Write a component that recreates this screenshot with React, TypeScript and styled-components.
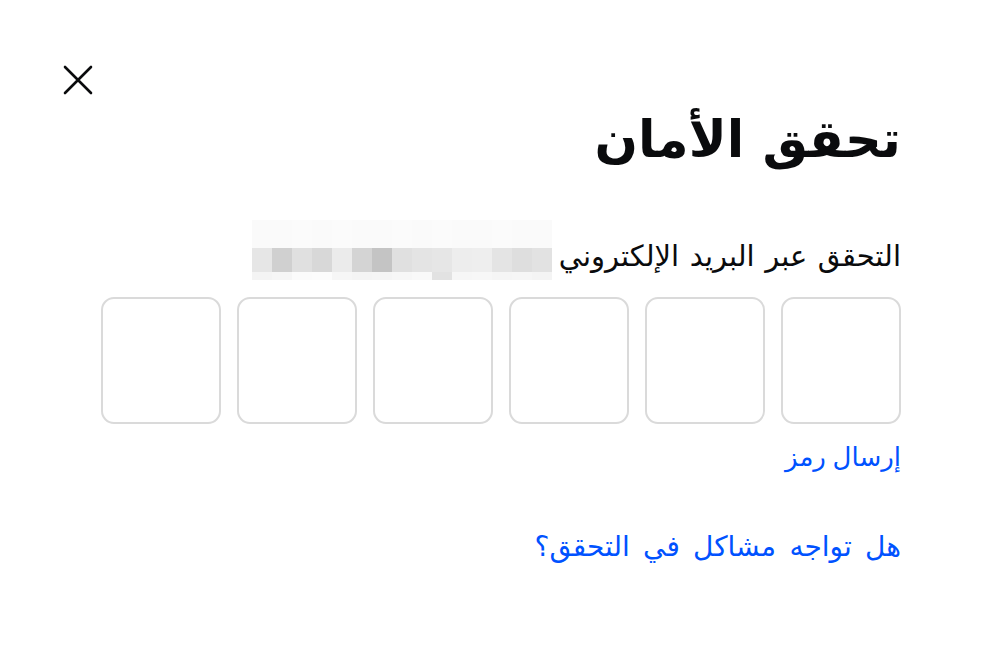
import { createGlobalStyle } from "styled-components";
import styled from "styled-components";

const GlobalStyle = createGlobalStyle`
  html, body {
    margin: 0;
    padding: 0;
    background: #ffffff;
  }
  body {
    font-family: "Noto Sans", "DejaVu Sans", sans-serif;
    color: #0a0b0d;
  }
`;

const Page = styled.div`
  width: 1002px;
  height: 670px;
  box-sizing: border-box;
  padding: 63px 0 0 0;
  position: relative;
`;

const CloseButton = styled.button`
  position: absolute;
  left: 60px;
  top: 62px;
  width: 36px;
  height: 36px;
  padding: 0;
  border: none;
  background: none;
  cursor: pointer;
  display: flex;
  align-items: center;
  justify-content: center;
`;

const Content = styled.div`
  width: 800px;
  margin: 0 auto;
  direction: rtl;
  display: flex;
  flex-direction: column;
  align-items: stretch;
`;

const Title = styled.h1`
  margin: 38px 0 0 0;
  font-size: 51px;
  font-weight: 700;
  line-height: 72px;
  word-spacing: 5px;
  text-align: right;
`;

const SubRow = styled.div`
  display: flex;
  align-items: center;
  gap: 7px;
  margin-top: 52px;
  height: 60px;
`;

const Subtitle = styled.span`
  font-size: 29px;
  line-height: 40px;
  word-spacing: 3px;
  white-space: nowrap;
`;

const Redaction = styled.svg`
  flex-shrink: 0;
  margin-bottom: 10px;
`;

const CodeRow = styled.div`
  display: grid;
  grid-template-columns: repeat(6, 1fr);
  gap: 16px;
  margin-top: 12px;
`;

const CodeBox = styled.input`
  height: 127px;
  box-sizing: border-box;
  border: 2px solid #dadada;
  border-radius: 13px;
  background: #ffffff;
  font-size: 40px;
  text-align: center;
  outline: none;
  width: 100%;
`;

const LinkText = styled.a<{ $top: number; $size: number; $spacing?: number }>`
  display: block;
  margin-top: ${(p) => p.$top}px;
  color: #0052ff;
  font-size: ${(p) => p.$size}px;
  line-height: 40px;
  word-spacing: ${(p) => p.$spacing ?? 0}px;
  text-decoration: none;
  cursor: pointer;
  align-self: flex-start;
`;

const redacted = {
  top: ["#fafafa", "#fafafa", "#fbfbfb", "#fafafa", "#fbfbfb", "#fafafa", "#fafafa", "#fbfbfb", "#fafafa", "#fbfbfb", "#fafafa", "#fafafa", "#fbfbfb", "#fafafa", "#fafafa"],
  mid: ["#e6e6e6", "#d0d0d0", "#e0e0e0", "#d8d8d8", "#ebebeb", "#d4d4d4", "#c4c4c4", "#e0e0e0", "#e4e4e4", "#e6e6e6", "#ededed", "#eeeeee", "#e4e4e4", "#dedede", "#e2e2e2"],
  bot: ["#f4f4f4", "#f6f6f6", "#fbfbfb", "#fcfcfc", "#f6f6f6", "#f4f4f4", "#f5f5f5", "#f7f7f7", "#f9f9f9", "#e2e2e2", "#f6f6f6", "#f7f7f7", "#f5f5f5", "#f6f6f6", "#f4f4f4"],
};

function RedactedEmail() {
  const cell = 20;
  const n = redacted.mid.length;
  const w = 300;
  const x0 = w - n * cell;
  return (
    <Redaction width={w} height={60} viewBox={`0 0 ${w} 60`}>
      <rect x={0} y={0} width={w} height={60} fill="#fcfcfc" />
      {redacted.top.map((c, i) => (
        <rect key={"t" + i} x={x0 + i * cell} y={0} width={cell} height={28} fill={c} />
      ))}
      {redacted.mid.map((c, i) => (
        <rect key={"m" + i} x={x0 + i * cell} y={28} width={cell} height={24} fill={c} />
      ))}
      {redacted.bot.map((c, i) => (
        <rect key={"b" + i} x={x0 + i * cell} y={52} width={cell} height={8} fill={c} />
      ))}
    </Redaction>
  );
}

export default function App() {
  return (
    <>
      <GlobalStyle />
      <Page>
        <CloseButton aria-label="إغلاق">
          <svg width="32" height="32" viewBox="0 0 32 32">
            <path d="M3 3 L29 29 M29 3 L3 29" stroke="#0a0b0d" strokeWidth="2.6" strokeLinecap="round" />
          </svg>
        </CloseButton>
        <Content>
          <Title>تحقق الأمان</Title>
          <SubRow>
            <Subtitle>التحقق عبر البريد الإلكتروني</Subtitle>
            <RedactedEmail />
          </SubRow>
          <CodeRow>
            {Array.from({ length: 6 }).map((_, i) => (
              <CodeBox key={i} maxLength={1} inputMode="numeric" />
            ))}
          </CodeRow>
          <LinkText $top={12} $size={26}>إرسال رمز</LinkText>
          <LinkText $top={49} $size={28} $spacing={6}>هل تواجه مشاكل في التحقق؟</LinkText>
        </Content>
      </Page>
    </>
  );
}
